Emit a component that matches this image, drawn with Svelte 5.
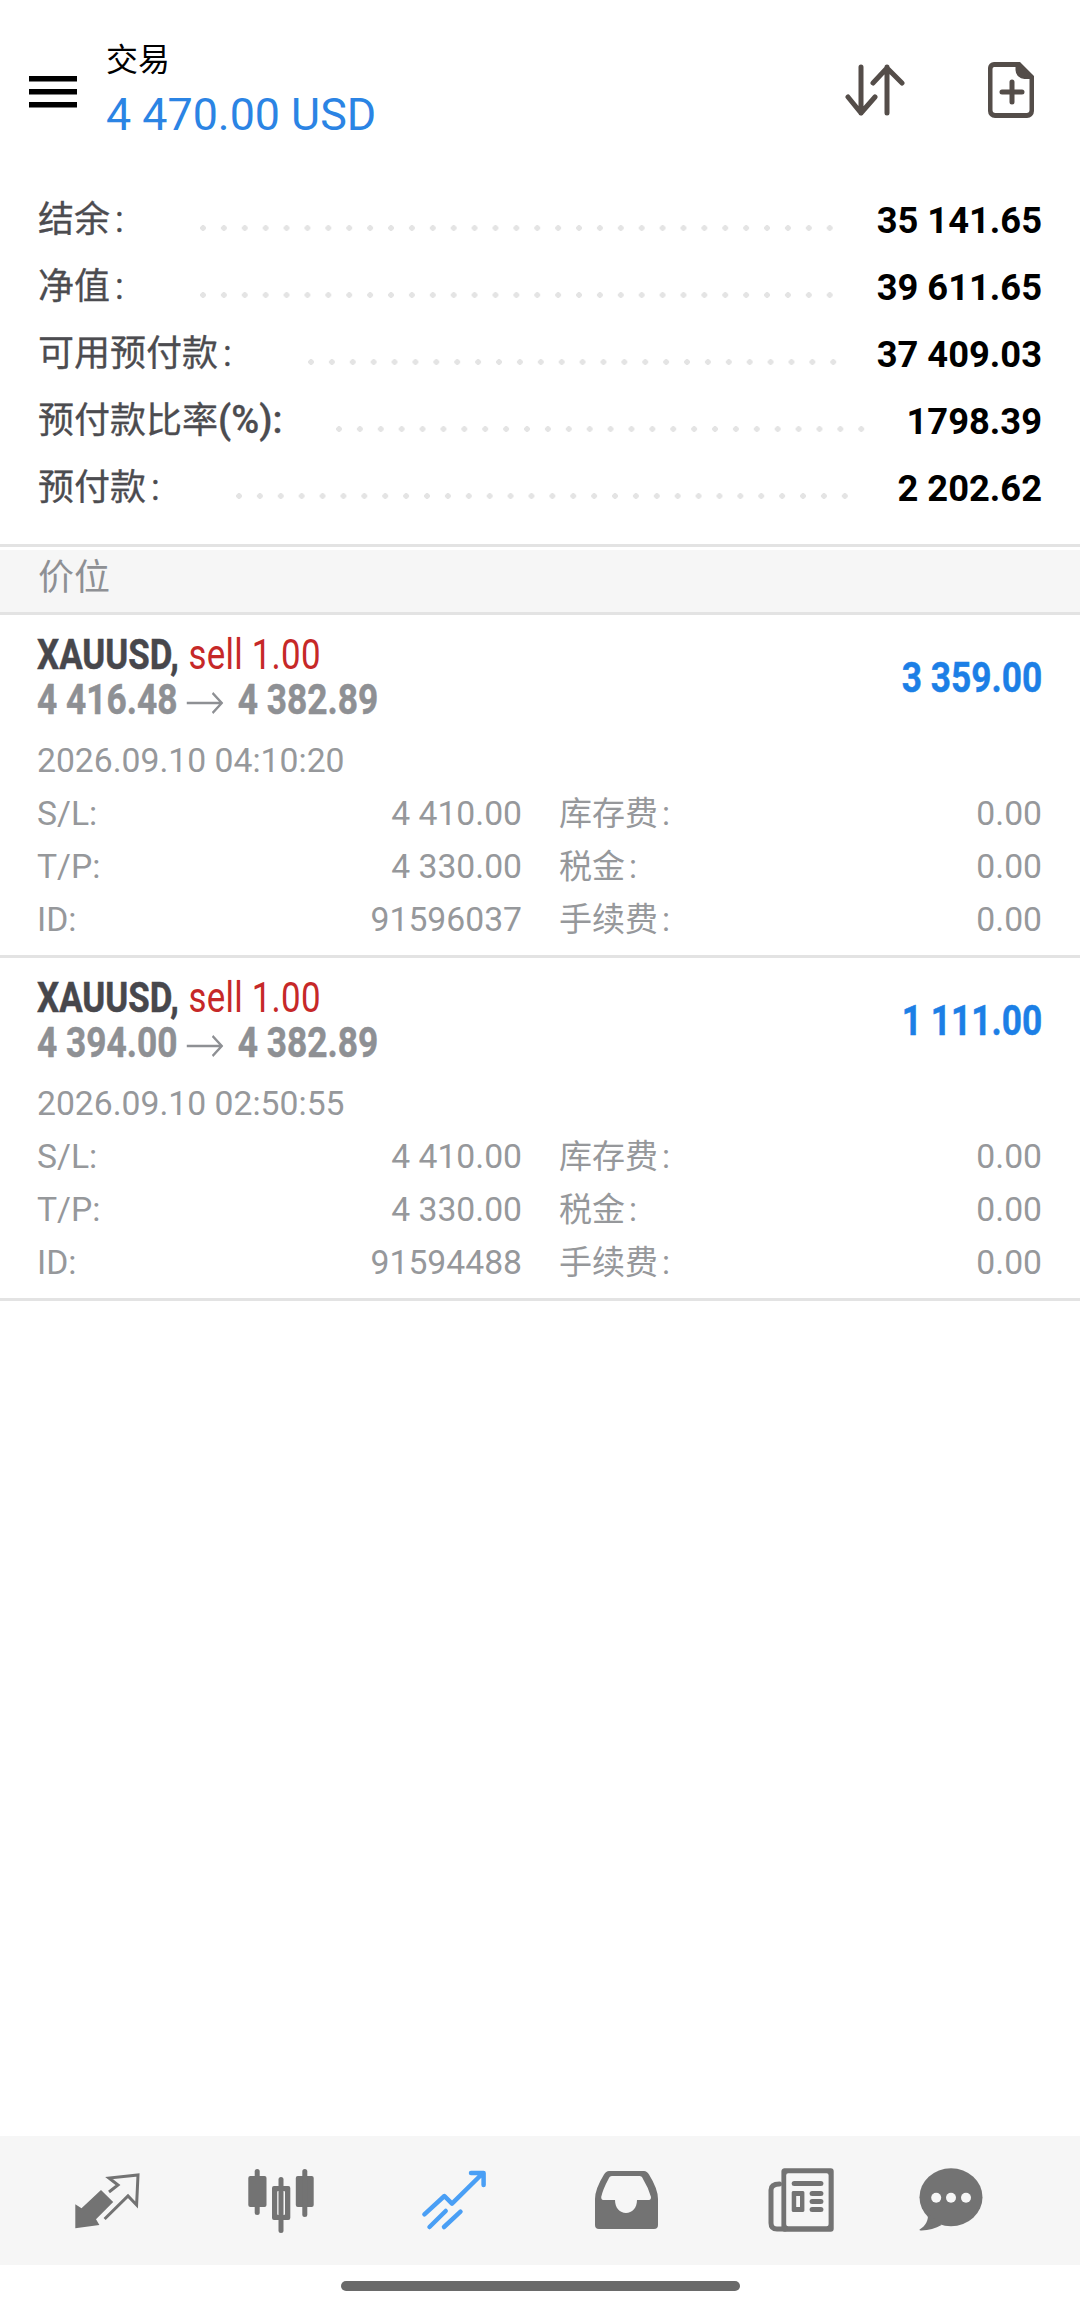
<script lang="ts">
  const summary = [
    { label: '结余', unit: '', value: '35 141.65', gap: 'wide' },
    { label: '净值', unit: '', value: '39 611.65', gap: 'wide' },
    { label: '可用预付款', unit: '', value: '37 409.03', gap: 'wide' },
    { label: '预付款比率', unit: '(%)', value: '1798.39', gap: 'narrow' },
    { label: '预付款', unit: '', value: '2 202.62', gap: 'wide' }
  ];

  const positions = [
    { open: '4 416.48', close: '4 382.89', profit: '3 359.00', time: '2026.09.10 04:10:20', id: '91596037' },
    { open: '4 394.00', close: '4 382.89', profit: '1 111.00', time: '2026.09.10 02:50:55', id: '91594488' }
  ];
</script>

<div class="screen">
  <header>
    <svg class="menu" width="48" height="32" viewBox="0 0 48 32" aria-hidden="true">
      <path d="M0 0h48v5.500H0zM0 13h48v5.500H0zM0 26h48v5.500H0z" fill="#000" />
    </svg>
    <div class="title">
      <div class="name">交易</div>
      <div class="balance">4 470.00 USD</div>
    </div>
    <svg class="sort" width="60" height="60" viewBox="0 0 60 60" fill="none" stroke="#544d49" stroke-width="5" stroke-linecap="round" stroke-linejoin="round" aria-hidden="true">
      <path d="M16 7v46M3 37l13 16 14-16M42 7v46M28 23L42 8l15 15" />
    </svg>
    <svg class="file" width="50" height="60" viewBox="0 0 50 60" aria-hidden="true">
      <path fill="#544d49" fill-rule="evenodd" d="M8 2h26l14 14v35a7 7 0 0 1-7 7H9a7 7 0 0 1-7-7V8a6 6 0 0 1 6-6zm0 5a2 2 0 0 0-1.500 2v41a3 3 0 0 0 3 3h31a3 3 0 0 0 3-3V19h-5a9 9 0 0 1-9-9V7z" />
      <path d="M26 22v20M16 32h20" stroke="#544d49" stroke-width="5" stroke-linecap="round" />
    </svg>
  </header>

  <section class="summary">
    {#each summary as row}
      <div class="row">
        <span class="label">{row.label}{#if row.unit}<span class="unit">{row.unit}:</span>{:else}<span class="colon">:</span>{/if}</span>
        <span class="dots {row.gap}"></span>
        <span class="value">{row.value}</span>
      </div>
    {/each}
  </section>

  <div class="band">价位</div>

  <main>
    {#each positions as p}
      <article>
        <div class="head">
          <div class="lines">
            <div class="narrow-text"><b>XAUUSD,</b> <span class="sell">sell 1.00</span></div>
            <div class="narrow-text price">
              {p.open}
              <svg class="arrow" width="44" height="24" viewBox="0 0 44 24" fill="none" stroke="#8e9094" stroke-width="2.500" aria-hidden="true">
                <path d="M0 12h42M31 2l11 10-11 10" />
              </svg>
              {p.close}
            </div>
          </div>
          <div class="profit">{p.profit}</div>
        </div>
        <div class="time">{p.time}</div>
        <dl>
          <div><dt>S/L:</dt><dd>4 410.00</dd></div>
          <div><dt class="cjk">库存费<span class="colon">:</span></dt><dd>0.00</dd></div>
          <div><dt>T/P:</dt><dd>4 330.00</dd></div>
          <div><dt class="cjk">税金<span class="colon">:</span></dt><dd>0.00</dd></div>
          <div><dt>ID:</dt><dd>{p.id}</dd></div>
          <div><dt class="cjk">手续费<span class="colon">:</span></dt><dd>0.00</dd></div>
        </dl>
      </article>
    {/each}
  </main>

  <nav>
    <svg width="80" height="80" viewBox="0 0 80 80" aria-hidden="true">
      <path fill="#737373" d="M8.300 43.300l6.200 4L34 29l12.200 12L29 58.300l3.400 5.700-24.100 3.300z" />
      <path fill="none" stroke="#737373" stroke-width="3" d="M42 31l9-7-9-7 29-3-1.400 30L61 35 37.600 58" />
    </svg>
    <svg width="80" height="80" viewBox="0 0 80 80" aria-hidden="true">
      <g fill="#737373">
        <rect x="7.300" y="15" width="18.200" height="31" rx="2" />
        <rect x="13.700" y="8" width="5" height="46" rx="2.500" />
        <rect x="54.800" y="15" width="17.900" height="31" rx="2" />
        <rect x="61.300" y="8" width="5" height="48" rx="2.500" />
        <rect x="37.500" y="16" width="5" height="56" rx="2.500" />
        <path fill-rule="evenodd" d="M33 25h14.300a2 2 0 0 1 2 2v30a2 2 0 0 1-2 2H33a2 2 0 0 1-2-2V27a2 2 0 0 1 2-2zm4.200 5a1 1 0 0 0-1 1v22a1 1 0 0 0 1 1H43a1 1 0 0 0 1-1V31a1 1 0 0 0-1-1z" />
      </g>
    </svg>
    <svg width="80" height="80" viewBox="0 0 80 80" fill="none" stroke="#4a9ff5" stroke-width="4.500" stroke-linecap="round" stroke-linejoin="round" aria-hidden="true">
      <path d="M10.400 53.300L30.400 35 38 42.700 67 14M57 12h12.600v12M15.500 66l16.200-16M30 66l16.500-15.300" />
    </svg>
    <svg class="tray" width="80" height="80" viewBox="0 0 80 80" aria-hidden="true">
      <path fill="#737373" fill-rule="evenodd" d="M23 10h35q3 0 5 3.500Q72 28 72 38v26q0 4-4 4H13q-4 0-4-4V38q0-10 9-24.500Q20 10 23 10zm3 5q-2.500 0-3.500 3Q17 28 15.200 36q0 3 2 3H29c0 8 5 13 11 13s11-5 11-13h12q2 0 2-3-3-10-8-18-1-3-3.500-3z" />
    </svg>
    <svg class="news" width="80" height="80" viewBox="0 0 80 80" aria-hidden="true">
      <g fill="#737373">
        <path fill-rule="evenodd" d="M24 7.300h45.700a3 3 0 0 1 3 3v57.400a3 3 0 0 1-3 3H24a3.600 3.600 0 0 1-3.600-3V10.300a3 3 0 0 1 3.600-3zm3.200 5a2 2 0 0 0-2 2v49a2 2 0 0 0 2 2h38.400a2 2 0 0 0 2-2v-49a2 2 0 0 0-2-2z" />
        <path fill="none" stroke="#737373" stroke-width="5" stroke-linecap="round" d="M18.500 23Q10 23 10 29v33q0 6 6 6h8" />
        <rect x="30.700" y="20" width="31.700" height="5" rx="2.500" />
        <path fill-rule="evenodd" d="M32 30h10a1.500 1.500 0 0 1 1.400 1.500v18a1.500 1.500 0 0 1-1.400 1.500H32a1.500 1.500 0 0 1-1.300-1.500v-18A1.500 1.500 0 0 1 32 30zm3.200 5v11H39V35z" />
        <rect x="48.600" y="30" width="13.800" height="5" rx="2.500" />
        <rect x="48.600" y="38" width="13.800" height="5" rx="2.500" />
        <rect x="48.600" y="46" width="13.800" height="5" rx="2.500" />
      </g>
    </svg>
    <svg class="chat" width="80" height="80" viewBox="0 0 80 80" aria-hidden="true">
      <ellipse cx="40" cy="36.200" rx="31.500" ry="29" fill="#737373" />
      <path fill="#737373" d="M16.600 52c1.500 7-2 13-8 16.500-.6.800.5 1 2 1 7-.3 14-2 20-5.500z" />
      <g fill="#f6f6f6">
        <circle cx="25.200" cy="36.700" r="5" />
        <circle cx="40" cy="36.700" r="5" />
        <circle cx="55" cy="36.700" r="5" />
      </g>
    </svg>
  </nav>

  <footer><span class="pill"></span></footer>
</div>

<style>
  :global(body) {
    background: #fff;
  }

  .screen {
    display: flex;
    flex-direction: column;
    width: 1080px;
    height: 2307px;
    overflow: hidden;
    font-family: Roboto, 'Noto Sans CJK SC', sans-serif;
  }

  header {
    display: flex;
    align-items: flex-start;
    height: 140px;
    padding: 40px 45px 0 29px;
    box-sizing: border-box;
  }

  .menu {
    margin-top: 36px;
  }

  .title {
    flex: 1;
    margin: 0 0 0 29px;
  }

  .name {
    font-size: 32px;
    line-height: 40px;
    color: #000;
  }

  .balance {
    font-size: 44.800px;
    line-height: 56px;
    margin-top: 7px;
    color: #2b84e4;
  }

  .sort {
    margin: 20px 81px 0 0;
  }

  .file {
    margin: 20px -1px 0 0;
  }

  .summary {
    padding: 45px 38px 24px;
  }

  .row {
    display: flex;
    align-items: center;
    height: 67px;
  }

  .label {
    position: relative;
    top: -3px;
    font-size: 36px;
    color: #4c4c50;
    white-space: nowrap;
    -webkit-text-stroke: 0.300px #4c4c50;
  }

  .colon {
    margin-left: 5px;
  }

  .unit {
    font-size: 38px;
    font-weight: 500;
  }

  .dots {
    flex: 1;
    height: 6px;
    margin: 18px 36px 0 76px;
    background-image: radial-gradient(circle at 3px 3px, #e4e4e4 2.700px, transparent 3px);
    background-size: 20.900px 6px;
    background-repeat: repeat-x;
  }

  .dots.narrow {
    margin-left: 54px;
  }

  .value {
    position: relative;
    top: 2px;
    font-size: 36.300px;
    font-weight: 700;
    color: #000;
  }

  .band {
    height: 65px;
    padding-left: 38px;
    border-top: 3px solid #e3e3e3;
    border-bottom: 3px solid #e3e3e3;
    background: linear-gradient(#fff 3px, #f6f6f6 3px);
    font-size: 36px;
    line-height: 62px;
    color: #8e9094;
  }

  main {
    flex: 1;
  }

  article {
    padding: 17px 38px 9px 37px;
    border-bottom: 3px solid #e3e3e3;
    height: 314px;
    box-sizing: content-box;
  }

  .head {
    display: flex;
    justify-content: space-between;
    align-items: center;
  }

  .narrow-text {
    font-size: 42px;
    line-height: 45px;
    white-space: nowrap;
    transform: scaleX(0.83);
    transform-origin: left center;
    color: #47474c;
  }

  .narrow-text b {
    font-weight: 700;
    -webkit-text-stroke: 0.500px #47474c;
  }

  .sell {
    margin-left: 1px;
    letter-spacing: 0.300px;
    color: #c62828;
  }

  .price {
    font-weight: 700;
    color: #8e9094;
    -webkit-text-stroke: 0.500px #8e9094;
    transform: scaleX(0.84);
  }

  .arrow {
    vertical-align: -1px;
    margin-right: 7px;
  }

  .profit {
    font-size: 42px;
    font-weight: 700;
    color: #1c7fe6;
    -webkit-text-stroke: 0.500px #1c7fe6;
    transform: scaleX(0.84);
    transform-origin: right center;
  }

  .time {
    margin-top: 12px;
    font-size: 33.700px;
    line-height: 53px;
    color: #96989b;
  }

  dl {
    display: grid;
    grid-template-columns: 485px 1fr;
    column-gap: 37px;
    margin: 0;
  }

  dl div {
    display: flex;
    justify-content: space-between;
    height: 53px;
    line-height: 53px;
    font-size: 33.700px;
    color: #96989b;
  }

  dt.cjk {
    font-size: 33px;
  }

  dt .colon {
    margin-left: 4px;
  }

  dd {
    margin: 0;
  }

  nav {
    display: flex;
    align-items: center;
    height: 129px;
    padding-left: 67px;
    gap: 93.600px;
    background: #f6f6f6;
  }

  .tray {
    margin-left: -1.500px;
  }

  .news {
    margin-left: 1.500px;
  }

  .chat {
    margin-left: -23.500px;
  }

  footer {
    display: flex;
    justify-content: center;
    height: 42px;
    padding-top: 16px;
    box-sizing: border-box;
  }

  .pill {
    width: 399px;
    height: 10px;
    border-radius: 5px;
    background: #6a6a6a;
  }
</style>
